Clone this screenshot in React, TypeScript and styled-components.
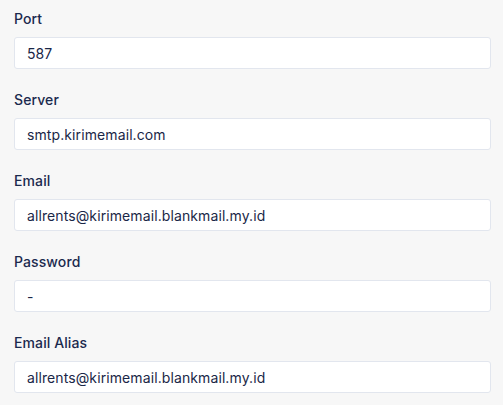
import React from "react";
import styled, { createGlobalStyle } from "styled-components";

const GlobalStyle = createGlobalStyle`
  html, body {
    margin: 0;
    padding: 0;
    background: #f7f7f7;
  }
  body {
    font-family: Inter, "Noto Sans", "Liberation Sans", sans-serif;
    -webkit-font-smoothing: antialiased;
  }
`;

const Form = styled.div`
  display: flex;
  flex-direction: column;
  gap: 21px;
  padding: 9px 12px 0 14px;
`;

const Field = styled.div`
  display: flex;
  flex-direction: column;
  gap: 8px;
`;

const Label = styled.label`
  font-size: 14px;
  line-height: 20px;
  font-weight: 500;
  letter-spacing: 0.1px;
  color: #1b2a4e;
`;

const Input = styled.input`
  box-sizing: border-box;
  height: 32px;
  width: 100%;
  padding: 0 12px;
  border: 1px solid #e2e6ee;
  border-radius: 3px;
  background: #ffffff;
  font-family: inherit;
  font-size: 14px;
  letter-spacing: 0.1px;
  color: #1a2747;
  outline: none;
`;

const fields = [
  { label: "Port", value: "587" },
  { label: "Server", value: "smtp.kirimemail.com" },
  { label: "Email", value: "allrents@kirimemail.blankmail.my.id" },
  { label: "Password", value: "-" },
  { label: "Email Alias", value: "allrents@kirimemail.blankmail.my.id" },
];

const App = () => {
  return (
    <>
      <GlobalStyle />
      <Form>
        {fields.map((f) => (
          <Field key={f.label}>
            <Label>{f.label}</Label>
            <Input defaultValue={f.value} readOnly />
          </Field>
        ))}
      </Form>
    </>
  );
};

export default App;
